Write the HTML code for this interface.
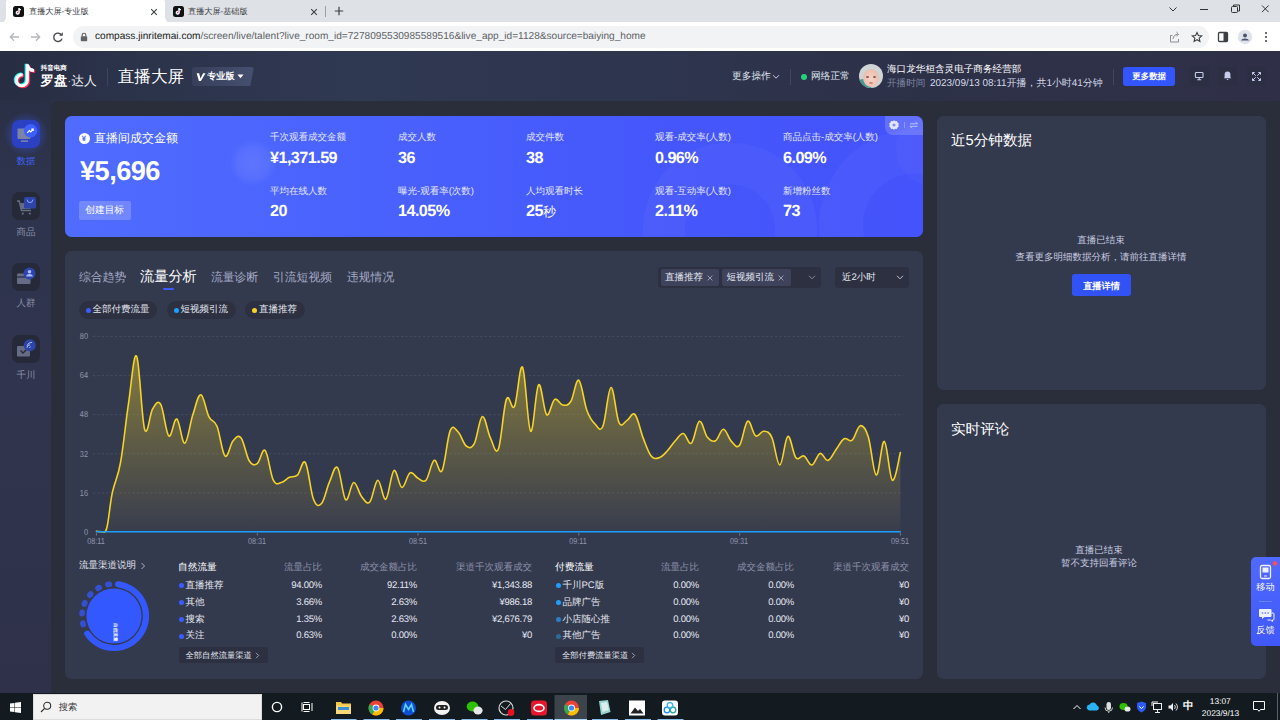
<!DOCTYPE html>
<html lang="zh">
<head>
<meta charset="utf-8">
<title>直播大屏-专业版</title>
<style>
*{box-sizing:border-box;margin:0;padding:0}
html,body{width:1280px;height:720px;overflow:hidden;background:#2a2d3a;font-family:"Liberation Sans",sans-serif;text-rendering:geometricPrecision;}
body{position:relative}
.a{position:absolute;white-space:nowrap;line-height:1}
.num{font-weight:700;letter-spacing:-0.3px}
/* browser chrome */
#tabstrip{left:0;top:0;width:1280px;height:23px;background:#dee1e6}
#toolbar{left:0;top:22px;width:1280px;height:29px;background:#fff}
#tab1{left:5.8px;top:-3px;width:159.600px;height:26px;background:#fff;border-radius:6px 6px 0 0}
.fl{top:17px;width:6px;height:6px}
#omni{left:72.600px;top:25.700px;width:1136px;height:22.400px;border-radius:11.200px;background:#f1f3f4}
.tabt{font-size:8.15px;color:#3c4043;top:7.5px}
/* page */
#hdr{left:0;top:51px;width:1280px;height:51px;background:linear-gradient(90deg,#272d42 0%,#2c344c 12%,#303952 28%,#2e354e 50%,#2d3148 72%,#2f3047 100%)}
#side{left:0;top:100px;width:52px;height:593px;background:linear-gradient(180deg,#292f45 0%,#2e344d 12%,#30344e 45%,#2f334b 75%,#2e3149 100%)}
#main{left:51px;top:101px;width:1229px;height:592px;background:#2a2d3a;border-radius:7px 0 0 0}
.card{background:#343a4e;border-radius:6.5px}
#blue{left:65px;top:115.5px;width:858.3px;height:121.5px;border-radius:6.5px;background:linear-gradient(90deg,#506cff 0%,#4a62fd 35%,#4557fb 70%,#4453fb 100%);overflow:hidden}
#chartc{left:65px;top:251px;width:858.300px;height:428px}
#p1{left:937.300px;top:115.500px;width:328.300px;height:274.500px}
#p2{left:937.300px;top:404px;width:328.300px;height:275px}
#task{left:0;top:692.6px;width:1280px;height:27.4px;background:#131b20}
.ml{font-size:9.5px;color:#e3e7ff}
.mv{font-size:16.2px;color:#fff;font-weight:700;letter-spacing:-0.55px}
.tab{font-size:11.8px;color:#a3a9c4;top:271.7px}
.pill{height:18px;top:301.400px;background:#2c3041;border-radius:9px}
.pt{font-size:9.5px;color:#e6e8f2;top:305.400px}
.dot{width:5px;height:5px;border-radius:50%}
.yl{font-size:8.6px;color:#9096ae;width:12px;text-align:right;left:76px;transform:scaleX(.86);transform-origin:100% 50%}
.xl{font-size:8.6px;color:#9096ae;top:536.7px;width:40px;text-align:center;transform:scaleX(.84)}
.th{font-size:9.5px;color:#8d93ab;top:563px}
.td{font-size:9.5px;color:#e6e8f2}
.td.r{letter-spacing:-0.25px}
.r{text-align:right}
</style>
</head>
<body>
<!-- ===== browser chrome ===== -->
<div class="a" id="tabstrip"></div>
<div class="a" id="toolbar"></div>
<div class="a" id="tab1"></div>
<div class="a fl" style="left:-0.2px;background:radial-gradient(circle at 0 0,rgba(255,255,255,0) 5.600px,#fff 6.200px)"></div>
<div class="a fl" style="left:165.400px;background:radial-gradient(circle at 100% 0,rgba(255,255,255,0) 5.600px,#fff 6.200px)"></div>
<div class="a" id="omni"></div>
<!-- tab 1 -->
<svg class="a" style="left:13px;top:6px" width="11" height="11" viewBox="0 0 11 11"><rect width="11" height="11" rx="2.5" fill="#111"/><path d="M6.1,2v4.6a1.3,1.3 0 1 1-1.1-1.3" fill="none" stroke="#25f4ee" stroke-width="1.2" transform="translate(-0.4,0.3)"/><path d="M6.1,2v4.6a1.3,1.3 0 1 1-1.1-1.3" fill="none" stroke="#fe2c55" stroke-width="1.2" transform="translate(0.4,-0.1)"/><path d="M6.1,2v4.6a1.3,1.3 0 1 1-1.1-1.3M6.1,2.2c.2,1 .9,1.6 1.9,1.7" fill="none" stroke="#fff" stroke-width="1.1"/></svg>
<div class="a tabt" style="left:29px">直播大屏-专业版</div>
<svg class="a" style="left:150px;top:8px" width="8" height="8" viewBox="0 0 8 8"><path d="M1.2,1.2L6.8,6.8M6.8,1.2L1.2,6.8" stroke="#3c4043" stroke-width="1.1"/></svg>
<!-- tab 2 -->
<svg class="a" style="left:173px;top:6px" width="11" height="11" viewBox="0 0 11 11"><rect width="11" height="11" rx="2.5" fill="#111"/><path d="M6.1,2v4.6a1.3,1.3 0 1 1-1.1-1.3" fill="none" stroke="#25f4ee" stroke-width="1.2" transform="translate(-0.4,0.3)"/><path d="M6.1,2v4.6a1.3,1.3 0 1 1-1.1-1.3" fill="none" stroke="#fe2c55" stroke-width="1.2" transform="translate(0.4,-0.1)"/><path d="M6.1,2v4.6a1.3,1.3 0 1 1-1.1-1.3M6.1,2.2c.2,1 .9,1.6 1.9,1.7" fill="none" stroke="#fff" stroke-width="1.1"/></svg>
<div class="a tabt" style="left:188px">直播大屏-基础版</div>
<svg class="a" style="left:310px;top:8px" width="8" height="8" viewBox="0 0 8 8"><path d="M1.2,1.2L6.8,6.8M6.8,1.2L1.2,6.8" stroke="#3c4043" stroke-width="1.1"/></svg>
<div class="a" style="left:325px;top:6px;width:1px;height:11px;background:#9aa0a6"></div>
<svg class="a" style="left:334px;top:6px" width="10" height="10" viewBox="0 0 10 10"><path d="M5,0.8V9.2M0.8,5H9.2" stroke="#3c4043" stroke-width="1.2"/></svg>
<!-- window controls -->
<svg class="a" style="left:1160.500px;top:3.300px" width="116" height="12" viewBox="0 0 116 12"><g fill="none" stroke="#333" stroke-width="1"><path d="M8.5,4.5l3.5,3.5l3.5,-3.5"/><path d="M39,6.5h8"/><rect x="70.5" y="3.5" width="6" height="6" rx="1"/><path d="M72.5,3.5v-1.5h6v6h-1.5"/><path d="M101,2.500l6.600,6.600M107.600,2.500l-6.600,6.600"/></g></svg>
<!-- nav buttons -->
<svg class="a" style="left:8px;top:29.800px" width="60" height="14" viewBox="0 0 60 14"><g fill="none" stroke="#b4b7bb" stroke-width="1.3"><path d="M11,7H2.5M6,3.2L2.3,7L6,10.8"/><path d="M23,7H31.5M28,3.2L31.7,7L28,10.8"/></g><g fill="none" stroke="#4a4d51" stroke-width="1.4"><path d="M53.6,5.2a4.2,4.2 0 1 0 .4,3.4"/></g><path d="M54.8,2.2v3.6h-3.6z" fill="#4a4d51"/></svg>
<!-- lock -->
<svg class="a" style="left:80px;top:31.600px" width="8" height="10" viewBox="0 0 8 10"><rect x="0.8" y="4.2" width="6.4" height="5" rx="0.8" fill="#5f6368"/><path d="M2.2,4.4V3a1.8,1.8 0 0 1 3.6,0V4.4" fill="none" stroke="#5f6368" stroke-width="1.1"/></svg>
<div class="a" id="url" style="left:95px;top:32.300px;font-size:10.1px;color:#5f6368"><span style="color:#202124">compass.jinritemai.com</span>/screen/live/talent?live_room_id=7278095530985589516&amp;live_app_id=1128&amp;source=baiying_home</div>
<!-- right toolbar icons -->
<svg class="a" style="left:1166.500px;top:28.700px" width="110" height="16" viewBox="0 0 110 16"><g fill="none" stroke="#8a8f96" stroke-width="1"><path d="M5.5,6.5h-2v6.5h8v-3"/><path d="M6,10c.3,-3 2,-4.6 5,-4.8M9.3,3l2.2,2.2L9.3,7.4"/><path d="M30,3.500l1.400,3l3.300,.4l-2.500,2.200l.7,3.300L30,10.700l-2.900,1.700l.7,-3.300l-2.500,-2.200l3.300,-.4z" stroke="#3c4043" stroke-width="1.100"/></g><rect x="51.5" y="3.5" width="9" height="9" rx="1" fill="none" stroke="#3c4043" stroke-width="1.3"/><rect x="56.5" y="3.5" width="4" height="9" fill="#3c4043"/><circle cx="78" cy="8" r="7.200" fill="#dfe3ea"/><circle cx="78" cy="6.4" r="2" fill="#4a5670"/><path d="M73.8,11.6a4.4,3 0 0 1 8.4,0z" fill="#4a5670"/><g fill="#3c4043"><circle cx="99" cy="4" r="1"/><circle cx="99" cy="8" r="1"/><circle cx="99" cy="12" r="1"/></g></svg>


<!-- ===== page ===== -->
<div class="a" id="hdr"></div>
<div class="a" id="side"></div>
<div class="a" style="left:50px;top:100px;width:10px;height:10px;background:#2a3046"></div>
<div class="a" id="main"></div>
<!-- logo -->
<svg class="a" style="left:12.400px;top:60.700px" width="28.600" height="30.800" viewBox="0 0 26 28">
<g fill="none" stroke-linecap="butt">
<path d="M14,3v14.5a5,5 0 1 1-4.3,-4.9M14,3.5c.6,3.2 2.8,5 6,5.2" stroke="#25f4ee" stroke-width="3" transform="translate(-1,-0.500)"/>
<path d="M14,3v14.5a5,5 0 1 1-4.3,-4.9M14,3.5c.6,3.2 2.8,5 6,5.2" stroke="#fe2c55" stroke-width="3" transform="translate(1,0.800)"/>
<path d="M14,3v14.5a5,5 0 1 1-4.3,-4.9M14,3.500c.6,3.200 2.800,5 6,5.200" stroke="#fff" stroke-width="2.800"/>
</g></svg>
<div class="a" style="left:40.8px;top:65.5px;font-size:6.5px;font-weight:700;color:#fff">抖音电商</div>
<div class="a" style="left:40.6px;top:74px;font-size:13.3px;color:#fff;font-weight:700">罗盘<span style="font-size:9px;vertical-align:1.5px;margin:0 0.5px;font-weight:400">·</span><span style="font-weight:400;font-size:12.8px;color:#eceef5">达人</span></div>
<div class="a" style="left:107px;top:68px;width:1px;height:18px;background:#3c435c"></div>
<div class="a" style="left:117.7px;top:68.5px;font-size:16.6px;color:#fff;font-weight:500">直播大屏</div>
<div class="a" style="left:192px;top:67px;width:62px;height:19px;background:linear-gradient(90deg,#373f5a,#455070);border-radius:3px;clip-path:polygon(0 0,100% 0,94% 100%,0 100%)"></div>
<svg class="a" style="left:195.5px;top:72px" width="10" height="10" viewBox="0 0 9 9"><path d="M0.6,1.2h2.2l1.2,4.6l2.4,-4.6h2.2l-4.2,7h-1.8z" fill="#fff"/></svg>
<div class="a" style="left:207.2px;top:72px;font-size:9.15px;color:#fff;font-weight:700">专业版</div>
<svg class="a" style="left:237px;top:74px" width="7" height="5" viewBox="0 0 7 5"><path d="M0.5,0.6h6l-3,3.6z" fill="#fff"/></svg>
<!-- right side -->
<div class="a" style="left:732px;top:72px;font-size:9.7px;color:#dfe2ee">更多操作</div>
<svg class="a" style="left:772px;top:74px" width="8" height="6" viewBox="0 0 8 6"><path d="M1,1.2l3,3l3,-3" fill="none" stroke="#c9cde0" stroke-width="1"/></svg>
<div class="a" style="left:790px;top:69px;width:1px;height:16px;background:#41475f"></div>
<div class="a" style="left:800.5px;top:74px;width:6px;height:6px;border-radius:50%;background:#22d37a"></div>
<div class="a" style="left:811px;top:72px;font-size:9.7px;color:#dfe2ee">网络正常</div>
<div class="a" style="left:858.600px;top:64.300px;width:24px;height:24px;border-radius:50%;background:#cfd4d6;overflow:hidden"><div class="a" style="left:-3px;top:15px;width:16px;height:12px;border-radius:50%;background:#3f9a92"></div><div class="a" style="left:4.500px;top:5px;width:16px;height:18px;border-radius:50%;background:radial-gradient(ellipse at 50% 55%,#f6d3c6 0%,#efc3b3 55%,#e2b3a4 100%)"></div><div class="a" style="left:7px;top:12px;width:3px;height:2px;border-radius:50%;background:#7a5b55"></div><div class="a" style="left:14px;top:12px;width:3px;height:2px;border-radius:50%;background:#7a5b55"></div><div class="a" style="left:10.500px;top:18px;width:4px;height:2px;border-radius:50%;background:#d77f7f"></div></div>
<div class="a" style="left:887px;top:64.5px;font-size:9.6px;color:#fff;font-weight:500">海口龙华桓含灵电子商务经营部</div>
<div class="a" style="left:887px;top:78.5px;font-size:9.6px;color:#7f86a3">开播时间</div>
<div class="a" id="tm" style="left:930px;top:78.5px;font-size:9.950px;color:#d5d9ea">2023/09/13 08:11开播，共1小时41分钟</div>
<div class="a" style="left:1113px;top:69px;width:1px;height:16px;background:#41475f"></div>
<div class="a" style="left:1123px;top:66.5px;width:52.2px;height:19.5px;border-radius:3px;background:#3355fe"></div>
<div class="a" style="left:1132.3px;top:72px;font-size:8.45px;color:#fff;font-weight:700">更多数据</div>
<div class="a" style="left:1189.5px;top:66.5px;width:19px;height:19px;border-radius:3px;background:#2c2f43"></div>
<div class="a" style="left:1218px;top:66.5px;width:19px;height:19px;border-radius:3px;background:#2c2f43"></div>
<div class="a" style="left:1246.5px;top:66.5px;width:19px;height:19px;border-radius:3px;background:#2c2f43"></div>
<svg class="a" style="left:1188px;top:65px" width="80" height="22" viewBox="0 0 80 22"><g fill="none" stroke="#c7cdea" stroke-width="1.1"><rect x="7.4" y="7.5" width="7.6" height="5" rx="0.8"/><path d="M11.2,12.5v2M9.2,14.8h4"/></g><path d="M39.5,6.600a2.900,2.900 0 0 1 2.900,2.900v2.700l.9,1.100h-7.600l.9,-1.100v-2.700a2.900,2.900 0 0 1 2.900,-2.900zM38.600,14h1.800a.9,.9 0 0 1-1.800,0z" fill="#c7cdea"/><g fill="none" stroke="#c7cdea" stroke-width="1"><path d="M64.5,7.5l8,8M72.5,7.5l-8,8" stroke-dasharray="4.600 2.100"/><path d="M64.5,9.700v-2.200h2.200M70.300,7.500h2.200v2.200M72.5,13.300v2.200h-2.200M66.700,15.500h-2.200v-2.200"/></g></svg>

<div class="a" style="left:4px;top:112px;width:44px;height:44px;border-radius:50%;background:radial-gradient(circle,rgba(60,90,255,.55) 0%,rgba(60,90,255,.25) 45%,rgba(60,90,255,0) 72%)"></div>
<div class="a" style="left:12px;top:120px;width:28px;height:28px;border-radius:7px;background:#2b40c2"></div>
<svg class="a" style="left:12px;top:120px" width="28" height="28" viewBox="0 0 28 28"><rect x="5.500" y="8.500" width="13" height="10.500" rx="1" fill="#7d83a6"/><rect x="9" y="20.300" width="7" height="1.600" fill="#7d83a6"/><circle cx="18.600" cy="10.800" r="6.800" fill="#3d60ff"/><path d="M15.2,12.8l2.2,-2.3l1.4,1.3l2.3,-2.6M19.3,9.1h1.9v1.9" fill="none" stroke="#fff" stroke-width="1.2"/></svg>
<div class="a" style="left:16.800px;top:156.500px;font-size:9.300px;font-weight:500;color:#4063ff">数据</div>

<div class="a" style="left:12px;top:192px;width:28px;height:28px;border-radius:7px;background:#262a38"></div>
<svg class="a" style="left:12px;top:192px" width="28" height="28" viewBox="0 0 28 28"><path d="M5,9h2.2l2.3,9.5h9.5" fill="none" stroke="#666c85" stroke-width="1.5"/><rect x="8.5" y="11" width="10" height="6" fill="#666c85"/><circle cx="10.8" cy="21.6" r="1.1" fill="#666c85"/><circle cx="17.8" cy="21.6" r="1.1" fill="#666c85"/><rect x="12" y="5" width="12" height="11.5" rx="1.5" fill="#2d44a8"/><path d="M15.2,7.6a2.8,3 0 0 0 5.6,0" fill="none" stroke="#8ea0ff" stroke-width="1"/></svg>
<div class="a" style="left:16.5px;top:227.5px;font-size:9.5px;color:#8b90a8">商品</div>

<div class="a" style="left:12px;top:263px;width:28px;height:28px;border-radius:7px;background:#262a38"></div>
<svg class="a" style="left:12px;top:263px" width="28" height="28" viewBox="0 0 28 28"><rect x="5" y="10.5" width="13.5" height="10.5" rx="1" fill="#666c85"/><path d="M5,14h13.5" stroke="#262a38" stroke-width="1.2"/><circle cx="17.5" cy="10.5" r="6" fill="#2d44a8"/><circle cx="17.5" cy="8.8" r="1.8" fill="#aeb9ff"/><path d="M14.2,13.6a3.3,2.6 0 0 1 6.6,0z" fill="#aeb9ff"/></svg>
<div class="a" style="left:16.5px;top:299px;font-size:9.5px;color:#8b90a8">人群</div>

<div class="a" style="left:12px;top:335px;width:28px;height:28px;border-radius:7px;background:#262a38"></div>
<svg class="a" style="left:12px;top:335px" width="28" height="28" viewBox="0 0 28 28"><rect x="5" y="11" width="13" height="10.5" rx="1" fill="#666c85"/><path d="M8.5,15.5l2.5,2.5l4,-4" fill="none" stroke="#262a38" stroke-width="1.3"/><circle cx="17.8" cy="10.3" r="6" fill="#2d44a8"/><path d="M15,12.8a3,3 0 0 1 3,-3M15,10.6a5,5 0 0 1 5,-3.2M17.6,12.8a1,1 0 0 1 1,-1" fill="none" stroke="#aeb9ff" stroke-width="1"/></svg>
<div class="a" style="left:16.5px;top:370.5px;font-size:9.5px;color:#8b90a8">千川</div>


<div class="a" id="blue"></div>
<svg class="a" style="left:65px;top:115.500px" width="858.300" height="121.500" viewBox="65 115.500 858.300 121.500"><g fill="none" stroke="#fff"><circle cx="730" cy="229" r="66" stroke-width="42" stroke-opacity="0.035"/><circle cx="915" cy="225" r="74" stroke-width="44" stroke-opacity="0.03"/><circle cx="930" cy="150" r="34" stroke-width="0" fill="#fff" fill-opacity="0.025"/></g></svg>
<div class="a" style="left:230px;top:140px;width:46px;height:46px;border-radius:50%;background:radial-gradient(circle,rgba(255,255,255,.1) 0%,rgba(255,255,255,.06) 50%,rgba(255,255,255,0) 72%)"></div>
<div class="a" style="left:884.5px;top:116px;width:38.5px;height:18.5px;background:rgba(255,255,255,.17);border-radius:0 8px 0 8px"></div>
<svg class="a" style="left:888px;top:119px" width="34" height="12" viewBox="0 0 34 12"><path d="M6,1.3l1.3,.9l1.6,-.2l.6,1.5l1.3,.9l-.5,1.6l.5,1.6l-1.3,.9l-.6,1.5l-1.6,-.2l-1.3,.9l-1.3,-.9l-1.6,.2l-.6,-1.5l-1.3,-.9l.5,-1.6l-.5,-1.6l1.3,-.9l.6,-1.5l1.6,.2z" fill="#e4e8ff"/><circle cx="6" cy="6" r="1.6" fill="#7f90ff"/><path d="M16.5,3v6" stroke="rgba(255,255,255,.35)" stroke-width="0.8"/><path d="M22,4.8h7.5l-2,-2M29.5,7.3h-7.5l2,2" fill="none" stroke="#b9c3ff" stroke-width="1"/></svg>
<div class="a" style="left:79px;top:133px;width:11px;height:11px;border-radius:50%;background:#fff"></div>
<div class="a" style="left:81.7px;top:134.8px;font-size:7.5px;font-weight:700;color:#4a62fd">¥</div>
<div class="a" style="left:94px;top:132px;font-size:12px;color:#fff">直播间成交金额</div>
<div class="a num" id="big" style="left:80px;top:156.5px;font-size:27.2px;color:#fff;letter-spacing:-0.55px">¥5,696</div>
<div class="a" style="left:79px;top:201px;width:52px;height:19px;border-radius:2px;background:rgba(255,255,255,.2)"></div>
<div class="a" style="left:85.3px;top:205.7px;font-size:9.7px;color:#fff">创建目标</div>

<div class="a ml" style="left:270px;top:133px">千次观看成交金额</div>
<div class="a mv" style="left:270px;top:150px">¥1,371.59</div>
<div class="a ml" style="left:398px;top:133px">成交人数</div>
<div class="a mv" style="left:398px;top:150px">36</div>
<div class="a ml" style="left:526px;top:133px">成交件数</div>
<div class="a mv" style="left:526px;top:150px">38</div>
<div class="a ml" style="left:655px;top:133px">观看-成交率(人数)</div>
<div class="a mv" style="left:655px;top:150px">0.96%</div>
<div class="a ml" style="left:783px;top:133px">商品点击-成交率(人数)</div>
<div class="a mv" style="left:783px;top:150px">6.09%</div>

<div class="a ml" style="left:270px;top:186.5px">平均在线人数</div>
<div class="a mv" style="left:270px;top:203px">20</div>
<div class="a ml" style="left:398px;top:186.5px">曝光-观看率(次数)</div>
<div class="a mv" style="left:398px;top:203px">14.05%</div>
<div class="a ml" style="left:526px;top:186.5px">人均观看时长</div>
<div class="a mv" style="left:526px;top:203px">25<span style="font-size:13px;font-weight:400;letter-spacing:0">秒</span></div>
<div class="a ml" style="left:655px;top:186.5px">观看-互动率(人数)</div>
<div class="a mv" style="left:655px;top:203px">2.11%</div>
<div class="a ml" style="left:783px;top:186.5px">新增粉丝数</div>
<div class="a mv" style="left:783px;top:203px">73</div>


<div class="a card" id="chartc"></div>
<svg class="a" style="left:0;top:0" width="1280" height="720" viewBox="0 0 1280 720">
<defs>
<linearGradient id="ag" x1="0" y1="336" x2="0" y2="532" gradientUnits="userSpaceOnUse">
<stop offset="0" stop-color="#f5d327" stop-opacity="0.46"/>
<stop offset="1" stop-color="#f5d327" stop-opacity="0.02"/>
</linearGradient>
</defs>
<path d="M96.4,531.3 C97.9,531.4 102.0,531.9 104.4,531.9 C108.1,532.8 109.5,504.6 112.5,491.9 C115.4,479.2 117.6,479.0 120.5,462.7 C123.5,446.4 125.6,422.4 128.6,402.9 C131.5,383.4 133.7,351.4 136.6,356.2 C139.5,361.0 141.7,419.6 144.6,429.2 C147.6,438.8 149.7,413.2 152.7,408.7 C155.6,404.2 157.8,399.4 160.7,404.4 C163.7,409.4 165.8,433.2 168.8,435.9 C171.7,438.6 173.9,417.7 176.8,419.0 C179.7,420.3 181.9,444.0 184.8,443.2 C187.8,442.4 189.9,423.5 192.9,414.6 C195.8,405.7 198.0,394.3 200.9,394.7 C203.9,395.1 206.0,411.1 209.0,416.9 C211.9,422.7 214.1,419.0 217.0,426.2 C219.9,433.4 222.1,453.3 225.0,456.0 C228.0,458.7 230.1,444.1 233.1,440.8 C236.0,437.5 238.2,434.3 241.1,437.9 C244.1,441.5 246.2,456.0 249.2,460.7 C252.1,465.4 254.3,465.5 257.2,463.6 C260.1,461.7 262.3,447.5 265.2,450.5 C268.2,453.5 270.3,474.3 273.3,480.2 C276.2,486.1 278.4,483.0 281.3,482.5 C284.3,482.0 286.4,478.6 289.4,477.3 C292.3,476.0 294.5,477.9 297.4,475.2 C300.3,472.5 302.5,458.3 305.4,462.7 C308.4,467.1 310.5,491.7 313.5,499.2 C316.4,506.7 318.6,506.7 321.5,503.5 C324.5,500.3 326.6,488.3 329.6,481.7 C332.5,475.1 334.7,464.4 337.6,467.7 C340.5,471.0 342.7,497.0 345.6,499.7 C348.6,502.4 350.7,483.0 353.7,482.5 C356.6,482.0 358.8,493.2 361.7,496.8 C364.7,500.4 366.8,505.0 369.8,502.0 C372.7,499.0 374.9,480.7 377.8,480.2 C380.7,479.7 382.9,501.0 385.8,499.2 C388.8,497.4 390.9,472.7 393.9,470.6 C396.8,468.5 399.0,487.1 401.9,487.5 C404.9,487.9 407.0,474.6 410.0,472.9 C412.9,471.2 415.1,476.9 418.0,478.2 C420.9,479.5 423.1,483.5 426.0,480.2 C429.0,476.9 431.1,462.2 434.1,460.4 C437.0,458.6 439.2,476.1 442.1,470.6 C445.1,465.1 447.2,437.7 450.2,430.6 C453.1,423.5 455.3,429.2 458.2,432.0 C461.1,434.8 463.3,443.9 466.2,446.0 C469.2,448.1 471.3,449.1 474.3,443.7 C477.2,438.3 479.4,417.7 482.3,416.6 C485.3,415.5 487.4,432.0 490.4,437.9 C493.3,443.8 495.5,456.1 498.4,449.0 C501.3,441.9 503.5,407.2 506.4,399.4 C509.4,391.6 511.5,412.3 514.5,406.4 C517.4,400.5 519.6,362.8 522.5,367.3 C525.5,371.8 527.6,428.0 530.6,431.2 C533.5,434.4 535.7,387.8 538.6,384.8 C541.5,381.8 543.7,411.9 546.6,414.6 C549.6,417.3 551.7,401.2 554.7,399.4 C557.6,397.6 559.8,404.6 562.7,405.0 C565.7,405.4 567.8,406.0 570.8,401.5 C573.7,397.0 575.9,378.6 578.8,380.2 C581.7,381.8 583.9,402.2 586.8,410.2 C589.8,418.2 591.9,421.0 594.9,423.9 C597.8,426.8 600.0,432.9 602.9,426.2 C605.9,419.5 608.0,388.1 611.0,387.5 C613.9,386.9 616.1,416.7 619.0,422.7 C621.9,428.7 624.1,421.9 627.0,420.4 C630.0,418.9 632.1,411.4 635.1,414.6 C638.0,417.8 640.2,430.3 643.1,437.9 C646.1,445.5 648.2,452.4 651.2,456.0 C654.1,459.6 656.3,458.6 659.2,457.7 C662.1,456.8 664.3,454.1 667.2,451.0 C670.2,447.9 672.3,444.0 675.3,440.8 C678.2,437.6 680.4,433.1 683.3,433.5 C686.3,433.9 688.4,445.4 691.4,443.2 C694.3,441.0 696.5,422.4 699.4,421.3 C702.3,420.2 704.5,433.7 707.4,437.3 C710.4,440.9 712.5,442.3 715.5,440.8 C718.4,439.3 720.6,429.0 723.5,429.2 C726.5,429.4 728.6,438.8 731.6,441.7 C734.5,444.6 736.7,448.9 739.6,445.2 C742.5,441.5 744.7,423.0 747.6,421.3 C750.6,419.6 752.7,434.1 755.7,435.9 C758.6,437.7 760.8,430.9 763.7,431.2 C766.7,431.5 768.8,431.1 771.8,437.3 C774.7,443.5 776.9,465.1 779.8,465.0 C782.7,464.9 784.9,437.8 787.8,436.5 C790.8,435.2 792.9,454.1 795.9,457.7 C798.8,461.3 801.0,454.7 803.9,456.0 C806.9,457.3 809.0,465.5 812.0,465.0 C814.9,464.5 817.1,454.2 820.0,453.4 C822.9,452.6 825.1,461.1 828.0,460.4 C831.0,459.7 833.1,453.6 836.1,449.6 C839.0,445.6 841.2,440.5 844.1,438.8 C847.1,437.1 849.2,442.6 852.2,440.2 C855.1,437.8 857.3,426.4 860.2,425.7 C863.1,425.0 865.3,427.5 868.2,436.5 C871.2,445.5 873.3,474.1 876.3,475.0 C879.2,475.9 881.4,440.4 884.3,441.4 C887.3,442.4 889.4,478.2 892.4,480.2 C895.3,482.2 898.9,457.6 900.4,452.5 L900.4,532 L96.4,532 Z" fill="url(#ag)" stroke="none"/>
<g stroke="rgba(190,198,230,0.17)" stroke-width="0.8" stroke-dasharray="2.2 2.2" fill="none">
<path d="M93,336.4H903M93,375.6H903M93,414.7H903M93,453.8H903M93,493H903"/>
</g>
<path d="M96.4,531.3 C97.9,531.4 102.0,531.9 104.4,531.9 C108.1,532.8 109.5,504.6 112.5,491.9 C115.4,479.2 117.6,479.0 120.5,462.7 C123.5,446.4 125.6,422.4 128.6,402.9 C131.5,383.4 133.7,351.4 136.6,356.2 C139.5,361.0 141.7,419.6 144.6,429.2 C147.6,438.8 149.7,413.2 152.7,408.7 C155.6,404.2 157.8,399.4 160.7,404.4 C163.7,409.4 165.8,433.2 168.8,435.9 C171.7,438.6 173.9,417.7 176.8,419.0 C179.7,420.3 181.9,444.0 184.8,443.2 C187.8,442.4 189.9,423.5 192.9,414.6 C195.8,405.7 198.0,394.3 200.9,394.7 C203.9,395.1 206.0,411.1 209.0,416.9 C211.9,422.7 214.1,419.0 217.0,426.2 C219.9,433.4 222.1,453.3 225.0,456.0 C228.0,458.7 230.1,444.1 233.1,440.8 C236.0,437.5 238.2,434.3 241.1,437.9 C244.1,441.5 246.2,456.0 249.2,460.7 C252.1,465.4 254.3,465.5 257.2,463.6 C260.1,461.7 262.3,447.5 265.2,450.5 C268.2,453.5 270.3,474.3 273.3,480.2 C276.2,486.1 278.4,483.0 281.3,482.5 C284.3,482.0 286.4,478.6 289.4,477.3 C292.3,476.0 294.5,477.9 297.4,475.2 C300.3,472.5 302.5,458.3 305.4,462.7 C308.4,467.1 310.5,491.7 313.5,499.2 C316.4,506.7 318.6,506.7 321.5,503.5 C324.5,500.3 326.6,488.3 329.6,481.7 C332.5,475.1 334.7,464.4 337.6,467.7 C340.5,471.0 342.7,497.0 345.6,499.7 C348.6,502.4 350.7,483.0 353.7,482.5 C356.6,482.0 358.8,493.2 361.7,496.8 C364.7,500.4 366.8,505.0 369.8,502.0 C372.7,499.0 374.9,480.7 377.8,480.2 C380.7,479.7 382.9,501.0 385.8,499.2 C388.8,497.4 390.9,472.7 393.9,470.6 C396.8,468.5 399.0,487.1 401.9,487.5 C404.9,487.9 407.0,474.6 410.0,472.9 C412.9,471.2 415.1,476.9 418.0,478.2 C420.9,479.5 423.1,483.5 426.0,480.2 C429.0,476.9 431.1,462.2 434.1,460.4 C437.0,458.6 439.2,476.1 442.1,470.6 C445.1,465.1 447.2,437.7 450.2,430.6 C453.1,423.5 455.3,429.2 458.2,432.0 C461.1,434.8 463.3,443.9 466.2,446.0 C469.2,448.1 471.3,449.1 474.3,443.7 C477.2,438.3 479.4,417.7 482.3,416.6 C485.3,415.5 487.4,432.0 490.4,437.9 C493.3,443.8 495.5,456.1 498.4,449.0 C501.3,441.9 503.5,407.2 506.4,399.4 C509.4,391.6 511.5,412.3 514.5,406.4 C517.4,400.5 519.6,362.8 522.5,367.3 C525.5,371.8 527.6,428.0 530.6,431.2 C533.5,434.4 535.7,387.8 538.6,384.8 C541.5,381.8 543.7,411.9 546.6,414.6 C549.6,417.3 551.7,401.2 554.7,399.4 C557.6,397.6 559.8,404.6 562.7,405.0 C565.7,405.4 567.8,406.0 570.8,401.5 C573.7,397.0 575.9,378.6 578.8,380.2 C581.7,381.8 583.9,402.2 586.8,410.2 C589.8,418.2 591.9,421.0 594.9,423.9 C597.8,426.8 600.0,432.9 602.9,426.2 C605.9,419.5 608.0,388.1 611.0,387.5 C613.9,386.9 616.1,416.7 619.0,422.7 C621.9,428.7 624.1,421.9 627.0,420.4 C630.0,418.9 632.1,411.4 635.1,414.6 C638.0,417.8 640.2,430.3 643.1,437.9 C646.1,445.5 648.2,452.4 651.2,456.0 C654.1,459.6 656.3,458.6 659.2,457.7 C662.1,456.8 664.3,454.1 667.2,451.0 C670.2,447.9 672.3,444.0 675.3,440.8 C678.2,437.6 680.4,433.1 683.3,433.5 C686.3,433.9 688.4,445.4 691.4,443.2 C694.3,441.0 696.5,422.4 699.4,421.3 C702.3,420.2 704.5,433.7 707.4,437.3 C710.4,440.9 712.5,442.3 715.5,440.8 C718.4,439.3 720.6,429.0 723.5,429.2 C726.5,429.4 728.6,438.8 731.6,441.7 C734.5,444.6 736.7,448.9 739.6,445.2 C742.5,441.5 744.7,423.0 747.6,421.3 C750.6,419.6 752.7,434.1 755.7,435.9 C758.6,437.7 760.8,430.9 763.7,431.2 C766.7,431.5 768.8,431.1 771.8,437.3 C774.7,443.5 776.9,465.1 779.8,465.0 C782.7,464.9 784.9,437.8 787.8,436.5 C790.8,435.2 792.9,454.1 795.9,457.7 C798.8,461.3 801.0,454.7 803.9,456.0 C806.9,457.3 809.0,465.5 812.0,465.0 C814.9,464.5 817.1,454.2 820.0,453.4 C822.9,452.6 825.1,461.1 828.0,460.4 C831.0,459.7 833.1,453.6 836.1,449.6 C839.0,445.6 841.2,440.5 844.1,438.8 C847.1,437.1 849.2,442.6 852.2,440.2 C855.1,437.8 857.3,426.4 860.2,425.7 C863.1,425.0 865.3,427.5 868.2,436.5 C871.2,445.5 873.3,474.1 876.3,475.0 C879.2,475.9 881.4,440.4 884.3,441.4 C887.3,442.4 889.4,478.2 892.4,480.2 C895.3,482.2 898.9,457.6 900.4,452.5" fill="none" stroke="#f5d327" stroke-width="1.6" stroke-linejoin="round" stroke-linecap="round"/>
<path d="M96,531.7H901" stroke="#1e9fff" stroke-width="1.4" fill="none"/>
<g stroke="#7b819b" stroke-width="0.9"><path d="M257.3,533.2v2.3M418,533.2v2.3M578.8,533.2v2.3M739.6,533.2v2.3M900.4,533.2v2.3M96.4,533.2v2.3"/></g>
</svg>
<div class="a tab" style="left:79px">综合趋势</div>
<div class="a" style="left:140px;top:270px;font-size:14.2px;color:#fff">流量分析</div>
<div class="a" style="left:163px;top:288px;width:11px;height:2px;border-radius:1px;background:#3d5bff"></div>
<div class="a tab" style="left:211px">流量诊断</div>
<div class="a tab" style="left:273px">引流短视频</div>
<div class="a tab" style="left:347px">违规情况</div>

<div class="a" style="left:658px;top:267px;width:163px;height:21px;border-radius:3px;background:#2c3041"></div>
<div class="a" style="left:660.5px;top:269px;width:58.5px;height:17px;border-radius:2px;background:#3e435b"></div>
<div class="a" style="left:665px;top:272.5px;font-size:9.5px;color:#e6e8f2">直播推荐</div>
<svg class="a" style="left:706.5px;top:274.5px" width="6" height="6" viewBox="0 0 6 6"><path d="M0.6,.6L5.4,5.4M5.4,.6L.6,5.4" stroke="#aeb3c9" stroke-width="0.8"/></svg>
<div class="a" style="left:722px;top:269px;width:68.5px;height:17px;border-radius:2px;background:#3e435b"></div>
<div class="a" style="left:726.5px;top:272.5px;font-size:9.5px;color:#e6e8f2">短视频引流</div>
<svg class="a" style="left:778px;top:274.5px" width="6" height="6" viewBox="0 0 6 6"><path d="M0.6,.6L5.4,5.4M5.4,.6L.6,5.4" stroke="#aeb3c9" stroke-width="0.8"/></svg>
<svg class="a" style="left:807.5px;top:275px" width="8" height="5" viewBox="0 0 8 5"><path d="M1,.8l3,3l3,-3" fill="none" stroke="#8f95ad" stroke-width="0.9"/></svg>
<div class="a" style="left:835px;top:267px;width:74px;height:21px;border-radius:3px;background:#2c3041"></div>
<div class="a" style="left:842px;top:272.5px;font-size:9.5px;color:#e6e8f2">近2小时</div>
<svg class="a" style="left:895.5px;top:275px" width="8" height="5" viewBox="0 0 8 5"><path d="M1,.8l3,3l3,-3" fill="none" stroke="#d5d8e6" stroke-width="0.9"/></svg>

<div class="a pill" style="left:78.5px;width:78.5px"></div>
<div class="a dot" style="left:85.5px;top:307.900px;background:#3d5bff"></div>
<div class="a pt" style="left:92.5px">全部付费流量</div>
<div class="a pill" style="left:166.5px;width:69px"></div>
<div class="a dot" style="left:173.5px;top:307.900px;background:#1e9fff"></div>
<div class="a pt" style="left:180.5px">短视频引流</div>
<div class="a pill" style="left:245px;width:59.5px"></div>
<div class="a dot" style="left:252px;top:307.900px;background:#f5d327"></div>
<div class="a pt" style="left:259px">直播推荐</div>

<div class="a yl" style="top:332px">80</div>
<div class="a yl" style="top:371px">64</div>
<div class="a yl" style="top:410px">48</div>
<div class="a yl" style="top:449.5px">32</div>
<div class="a yl" style="top:488.5px">16</div>
<div class="a yl" style="top:527.5px">0</div>
<div class="a xl" style="left:76px">08:11</div>
<div class="a xl" style="left:237px">08:31</div>
<div class="a xl" style="left:398px">08:51</div>
<div class="a xl" style="left:558px">09:11</div>
<div class="a xl" style="left:719px">09:31</div>
<div class="a xl" style="left:880px">09:51</div>

<div class="a" style="left:79px;top:560.5px;font-size:9.5px;color:#e6e8f2">流量渠道说明</div>
<svg class="a" style="left:140px;top:561.5px" width="6" height="8" viewBox="0 0 6 8"><path d="M1.5,1l3,3l-3,3" fill="none" stroke="#b9bdd0" stroke-width="0.9"/></svg>
<svg class="a" style="left:74.4px;top:575.75px" width="80" height="80" viewBox="0 0 80 80">
<path d="M9.18,48.61A32,32 0 0 1 8.82,47.2M8.09,37.66A32,32 0 0 1 8.23,36.21M10.33,28.01A32,32 0 0 1 10.9,26.68M15.81,19.05A32,32 0 0 1 16.79,17.97M24,12.29A32,32 0 0 1 25.27,11.59M33.95,8.58A32,32 0 0 1 35.38,8.34" fill="none" stroke="#3450d2" stroke-width="5.6" stroke-linecap="round"/>
<path d="M44.18,8.27A32,32 0 1 1 13.32,57.66" fill="none" stroke="#3358ff" stroke-width="6.2" stroke-linecap="round"/>
<circle cx="40" cy="40" r="27.6" fill="#3358ff"/>
</svg>
<div class="a" style="left:105px;top:629.5px;width:19px;text-align:center;font-size:4.6px;font-weight:700;color:#eef1ff;transform:rotate(90deg);transform-origin:50% 50%">自然流量</div>
<div class="a" style="left:178px;top:562.5px;font-size:9.7px;color:#fff">自然流量</div>
<div class="a th r" style="left:262px;width:60px">流量占比</div>
<div class="a th r" style="left:337px;width:80px">成交金额占比</div>
<div class="a th r" style="left:432px;width:100px">渠道千次观看成交</div>
<div class="a" style="left:555px;top:562.5px;font-size:9.7px;color:#fff">付费流量</div>
<div class="a th r" style="left:639px;width:60px">流量占比</div>
<div class="a th r" style="left:714px;width:80px">成交金额占比</div>
<div class="a th r" style="left:809px;width:100px">渠道千次观看成交</div>
<div class="a dot" style="left:178.5px;top:583.4px;width:5px;height:5px;background:#3d5bff"></div>
<div class="a td" style="left:185.5px;top:581.1px">直播推荐</div>
<div class="a td r" style="left:262px;width:60px;top:581.1px">94.00%</div>
<div class="a td r" style="left:337px;width:80px;top:581.1px">92.11%</div>
<div class="a td r" style="left:432px;width:100px;top:581.1px">¥1,343.88</div>
<div class="a dot" style="left:555.5px;top:583.4px;width:5px;height:5px;background:#1e9fff"></div>
<div class="a td" style="left:562.5px;top:581.1px">千川PC版</div>
<div class="a td r" style="left:639px;width:60px;top:581.1px">0.00%</div>
<div class="a td r" style="left:714px;width:80px;top:581.1px">0.00%</div>
<div class="a td r" style="left:809px;width:100px;top:581.1px">¥0</div>
<div class="a dot" style="left:178.5px;top:600.1px;width:5px;height:5px;background:#3d5bff"></div>
<div class="a td" style="left:185.5px;top:597.8px">其他</div>
<div class="a td r" style="left:262px;width:60px;top:597.8px">3.66%</div>
<div class="a td r" style="left:337px;width:80px;top:597.8px">2.63%</div>
<div class="a td r" style="left:432px;width:100px;top:597.8px">¥986.18</div>
<div class="a dot" style="left:555.5px;top:600.1px;width:5px;height:5px;background:#1e9fff"></div>
<div class="a td" style="left:562.5px;top:597.8px">品牌广告</div>
<div class="a td r" style="left:639px;width:60px;top:597.8px">0.00%</div>
<div class="a td r" style="left:714px;width:80px;top:597.8px">0.00%</div>
<div class="a td r" style="left:809px;width:100px;top:597.8px">¥0</div>
<div class="a dot" style="left:178.5px;top:616.8px;width:5px;height:5px;background:#3d5bff"></div>
<div class="a td" style="left:185.5px;top:614.5px">搜索</div>
<div class="a td r" style="left:262px;width:60px;top:614.5px">1.35%</div>
<div class="a td r" style="left:337px;width:80px;top:614.5px">2.63%</div>
<div class="a td r" style="left:432px;width:100px;top:614.5px">¥2,676.79</div>
<div class="a dot" style="left:555.5px;top:616.8px;width:5px;height:5px;background:#2b7fc4"></div>
<div class="a td" style="left:562.5px;top:614.5px">小店随心推</div>
<div class="a td r" style="left:639px;width:60px;top:614.5px">0.00%</div>
<div class="a td r" style="left:714px;width:80px;top:614.5px">0.00%</div>
<div class="a td r" style="left:809px;width:100px;top:614.5px">¥0</div>
<div class="a dot" style="left:178.5px;top:633.5px;width:5px;height:5px;background:#3d5bff"></div>
<div class="a td" style="left:185.5px;top:631.2px">关注</div>
<div class="a td r" style="left:262px;width:60px;top:631.2px">0.63%</div>
<div class="a td r" style="left:337px;width:80px;top:631.2px">0.00%</div>
<div class="a td r" style="left:432px;width:100px;top:631.2px">¥0</div>
<div class="a dot" style="left:555.5px;top:633.5px;width:5px;height:5px;background:#2d6a9a"></div>
<div class="a td" style="left:562.5px;top:631.2px">其他广告</div>
<div class="a td r" style="left:639px;width:60px;top:631.2px">0.00%</div>
<div class="a td r" style="left:714px;width:80px;top:631.2px">0.00%</div>
<div class="a td r" style="left:809px;width:100px;top:631.2px">¥0</div>
<div class="a" style="left:178.5px;top:647px;width:89px;height:16px;border-radius:2px;background:#2c3041"></div>
<div class="a" style="left:185.5px;top:651px;font-size:8.3px;color:#e6e8f2">全部自然流量渠道</div>
<svg class="a" style="left:254.5px;top:651.5px" width="5" height="7" viewBox="0 0 5 7"><path d="M1,.8l2.7,2.7l-2.7,2.7" fill="none" stroke="#b9bdd0" stroke-width="0.8"/></svg>
<div class="a" style="left:555px;top:647px;width:89px;height:16px;border-radius:2px;background:#2c3041"></div>
<div class="a" style="left:562px;top:651px;font-size:8.3px;color:#e6e8f2">全部付费流量渠道</div>
<svg class="a" style="left:631px;top:651.5px" width="5" height="7" viewBox="0 0 5 7"><path d="M1,.8l2.7,2.7l-2.7,2.7" fill="none" stroke="#b9bdd0" stroke-width="0.8"/></svg>


<div class="a card" id="p1"></div>
<div class="a card" id="p2"></div>
<div class="a" style="left:951px;top:134px;font-size:14.600px;color:#fff">近5分钟数据</div>
<div class="a" style="left:1001px;top:236.200px;width:200px;text-align:center;font-size:9.5px;color:#c9cde0">直播已结束</div>
<div class="a" style="left:951px;top:252.500px;width:300px;text-align:center;font-size:9.5px;color:#c9cde0">查看更多明细数据分析，请前往直播详情</div>
<div class="a" style="left:1072px;top:274px;width:59px;height:22px;border-radius:3px;background:#3153f5"></div>
<div class="a" style="left:1072px;top:281.500px;width:59px;text-align:center;font-size:9.2px;color:#fff;font-weight:700">直播详情</div>
<div class="a" style="left:951px;top:423px;font-size:14.600px;color:#fff">实时评论</div>
<div class="a" style="left:999px;top:546px;width:200px;text-align:center;font-size:9.5px;color:#c9cde0">直播已结束</div>
<div class="a" style="left:999px;top:558.500px;width:200px;text-align:center;font-size:9.5px;color:#c9cde0">暂不支持回看评论</div>
<!-- floating widget -->
<div class="a" style="left:1251px;top:557px;width:29px;height:89px;border-radius:5px 0 0 5px;background:linear-gradient(180deg,#5069ff,#4058f8)"></div>
<svg class="a" style="left:1251px;top:557px" width="29" height="89" viewBox="0 0 29 89"><rect x="9.5" y="8.5" width="10" height="13" rx="1.5" fill="none" stroke="#eef1ff" stroke-width="1.3"/><rect x="11.5" y="10.5" width="6" height="5" fill="#eef1ff"/><path d="M13,19h3" stroke="#eef1ff" stroke-width="1"/><circle cx="24" cy="6.5" r="2.3" fill="#ff4d4f"/><path d="M8,44.5h13" stroke="rgba(255,255,255,.3)" stroke-width="0.7"/><path d="M9,52h10.5a1,1 0 0 1 1,1v6a1,1 0 0 1-1,1h-6l-2.5,2v-2h-2a1,1 0 0 1-1,-1v-6a1,1 0 0 1 1,-1z" fill="#eef1ff"/><path d="M20.5,56h1.5a1,1 0 0 1 1,1v5a1,1 0 0 1-1,1h-.5v1.5l-2,-1.5h-3" fill="none" stroke="#eef1ff" stroke-width="1"/><g fill="#4b63fb"><circle cx="11.5" cy="56" r=".8"/><circle cx="14.3" cy="56" r=".8"/><circle cx="17.1" cy="56" r=".8"/></g></svg>
<div class="a" style="left:1251px;top:583px;width:29px;text-align:center;font-size:9.200px;color:#fff;font-weight:500">移动</div>
<div class="a" style="left:1251px;top:626px;width:29px;text-align:center;font-size:9.200px;color:#fff;font-weight:500">反馈</div>


<div class="a" id="task"></div>
<!-- start -->
<svg class="a" style="left:10.3px;top:701.5px" width="11" height="11" viewBox="0 0 12 12"><path d="M0,1.7l4.9,-.7v4.7h-4.9zM5.5,.9l6.5,-.9v5.7h-6.5zM0,6.3h4.9v4.7l-4.9,-.7zM5.5,6.3h6.5v5.7l-6.5,-.9z" fill="#fff"/></svg>
<div class="a" style="left:32.5px;top:693.5px;width:229px;height:26.5px;background:#f2f2f2;border:1px solid #dcdcdc"></div>
<svg class="a" style="left:40px;top:701.3px" width="12" height="12" viewBox="0 0 12 12"><circle cx="7.2" cy="4.8" r="3.5" fill="none" stroke="#333" stroke-width="1.1"/><path d="M4.6,7.4L1,11" stroke="#333" stroke-width="1.2"/></svg>
<div class="a" style="left:58.8px;top:702.9px;font-size:9.3px;color:#333">搜索</div>
<svg class="a" style="left:269.3px;top:698.8px" width="50" height="16" viewBox="0 0 50 16"><circle cx="8" cy="8" r="4.6" fill="none" stroke="#fff" stroke-width="1.4"/><g fill="none" stroke="#fff" stroke-width="1"><rect x="34.5" y="5.5" width="6" height="5"/><path d="M33,3.5v9M43,4v8M34.5,3.5h6M34.5,12.5h6"/></g></svg>
<!-- apps -->
<svg class="a" style="left:330px;top:694.6px" width="360" height="26" viewBox="0 0 360 26">
<path d="M6,7h5l1.2,1.5h8.8v10.5h-15z" fill="#f5c646"/><rect x="6" y="10.5" width="15" height="8.5" fill="#f9d977"/><rect x="8" y="12" width="11" height="3" fill="#3b8fd8"/>
<circle cx="46" cy="13" r="7.5" fill="#ea4335"/><path d="M46,13L39.5,9.3A7.5,7.5 0 0 0 42.3,19.5z" fill="#34a853"/><path d="M46,13l-3.7,6.5A7.5,7.5 0 0 0 53.5,13z" fill="#fbbc05"/><circle cx="46" cy="13" r="3.4" fill="#fff"/><circle cx="46" cy="13" r="2.6" fill="#4285f4"/>
<circle cx="78.5" cy="13" r="7.5" fill="#0d4fd0"/><path d="M73.5,17l2,-7.5l3,5l3,-5l2,7.5" fill="none" stroke="#5fd0ff" stroke-width="1.6"/>
<ellipse cx="112" cy="13" rx="8" ry="7" fill="#f4f4f4"/><rect x="106" y="10" width="12" height="5" rx="2.5" fill="#222"/><circle cx="109.5" cy="12.5" r="1" fill="#fff"/><circle cx="114.5" cy="12.5" r="1" fill="#fff"/>
<ellipse cx="142.5" cy="11.5" rx="5.8" ry="5" fill="#2dc100"/><ellipse cx="148" cy="15.5" rx="4.6" ry="4" fill="#e8e8e8"/>
<circle cx="176" cy="13" r="7" fill="none" stroke="#d8d8d8" stroke-width="1.2"/><path d="M171,11l4.5,3.5l5,-6" fill="none" stroke="#d8d8d8" stroke-width="1"/><circle cx="181" cy="17.5" r="3.4" fill="#e81123"/>
<rect x="201" y="5.5" width="16" height="15" rx="3.5" fill="#e6162d"/><ellipse cx="209" cy="13" rx="5" ry="3.4" fill="none" stroke="#fff" stroke-width="1.6"/>
<rect x="224.500" y="-1.400" width="32.500" height="28" fill="#3c444b"/>
<circle cx="241.5" cy="13" r="7.5" fill="#ea4335"/><path d="M241.5,13L235,9.3A7.5,7.5 0 0 0 237.8,19.5z" fill="#34a853"/><path d="M241.5,13l-3.7,6.5A7.5,7.5 0 0 0 249,13z" fill="#fbbc05"/><circle cx="241.5" cy="13" r="3.4" fill="#fff"/><circle cx="241.5" cy="13" r="2.6" fill="#4285f4"/>
<path d="M269,6l9,-1l2.5,12l-9.5,3z" fill="#9bd3d0"/><path d="M271,8l6,-1l1.8,8l-6.3,2z" fill="#d9f0ee"/>
<rect x="299" y="5.5" width="16" height="15" fill="#fff"/><path d="M300.5,18.5l4.5,-6l3,3.5l2,-2l3.5,4.5z" fill="#222"/>
<rect x="332" y="5.5" width="16" height="15" rx="3" fill="#fff"/><circle cx="337" cy="15" r="2.8" fill="none" stroke="#1e88e5" stroke-width="1.3"/><circle cx="343" cy="15" r="2.8" fill="none" stroke="#26a69a" stroke-width="1.3"/><circle cx="340" cy="10.5" r="2.8" fill="none" stroke="#29b6f6" stroke-width="1.3"/>
<g fill="#86bdec"><rect x="1" y="24" width="25.500" height="1.500"/><rect x="33.500" y="24" width="26" height="1.500"/><rect x="66" y="24" width="26" height="1.500"/><rect x="99" y="24" width="26" height="1.500"/><rect x="131.500" y="24" width="26" height="1.500"/><rect x="164" y="24" width="26" height="1.500"/><rect x="197" y="24" width="26" height="1.500"/><rect x="224.500" y="24" width="32.500" height="1.500" fill="#a9d3f5"/><rect x="262" y="24" width="26" height="1.500"/><rect x="295" y="24" width="26" height="1.500"/><rect x="327.500" y="24" width="26" height="1.500"/></g>
</svg>
<!-- tray -->
<svg class="a" style="left:1068px;top:698px" width="135" height="18" viewBox="0 0 135 18">
<path d="M5.5,11l3.5,-3.5l3.5,3.5" fill="none" stroke="#fff" stroke-width="1"/>
<path d="M21,12.5a3,3 0 0 1 .6,-5.9a4,4 0 0 1 7.4,1a2.5,2.5 0 0 1-.3,4.9z" fill="#2ab4f5"/>
<rect x="38.5" y="4" width="4.5" height="8" rx="2.2" fill="#ddd"/><path d="M37,9.5a3.7,3.7 0 0 0 7.5,0M40.75,13.5v1.5" fill="none" stroke="#ccc" stroke-width="1"/>
<ellipse cx="55.5" cy="8.5" rx="4" ry="3.4" fill="#2dc100"/><ellipse cx="59.5" cy="11" rx="3" ry="2.6" fill="#e8e8e8"/>
<path d="M73.5,3.5l4.5,1.5v4c0,2.5 -2,4.5 -4.5,5.5c-2.5,-1 -4.5,-3 -4.5,-5.5v-4z" fill="#2b5bff"/><path d="M71.3,8.5l2.2,2l2.2,-2" fill="none" stroke="#fff" stroke-width="1"/>
<g fill="none" stroke="#eee" stroke-width="1"><rect x="85.5" y="5.5" width="8" height="6"/><path d="M89.5,11.5v2.5M87,14.5h5M84,4h6M84,4v4"/></g>
<path d="M100.5,7.5h2l2.5,-2.5v8l-2.5,-2.5h-2z" fill="#eee"/><path d="M106.5,7a3,3 0 0 1 0,4M108,5.5a5,5 0 0 1 0,7" fill="none" stroke="#eee" stroke-width="0.9"/>
</svg>
<div class="a" style="left:1183px;top:701.3px;font-size:10.5px;color:#fff;font-weight:700">中</div>
<div class="a" style="left:1200.3px;top:696.6px;width:40px;text-align:center;font-size:8.4px;color:#fff">13:07</div>
<div class="a" style="left:1195.5px;top:709px;width:50px;text-align:center;font-size:8.4px;color:#fff">2023/9/13</div>
<svg class="a" style="left:1251.5px;top:700px" width="14" height="13" viewBox="0 0 14 13"><path d="M1.5,1.5h11v8h-4l-1.5,1.8l-1.5,-1.8h-4z" fill="none" stroke="#fff" stroke-width="1"/></svg>
<div class="a" style="left:1277.3px;top:693px;width:1px;height:27px;background:#5a6070"></div>

</body>
</html>
